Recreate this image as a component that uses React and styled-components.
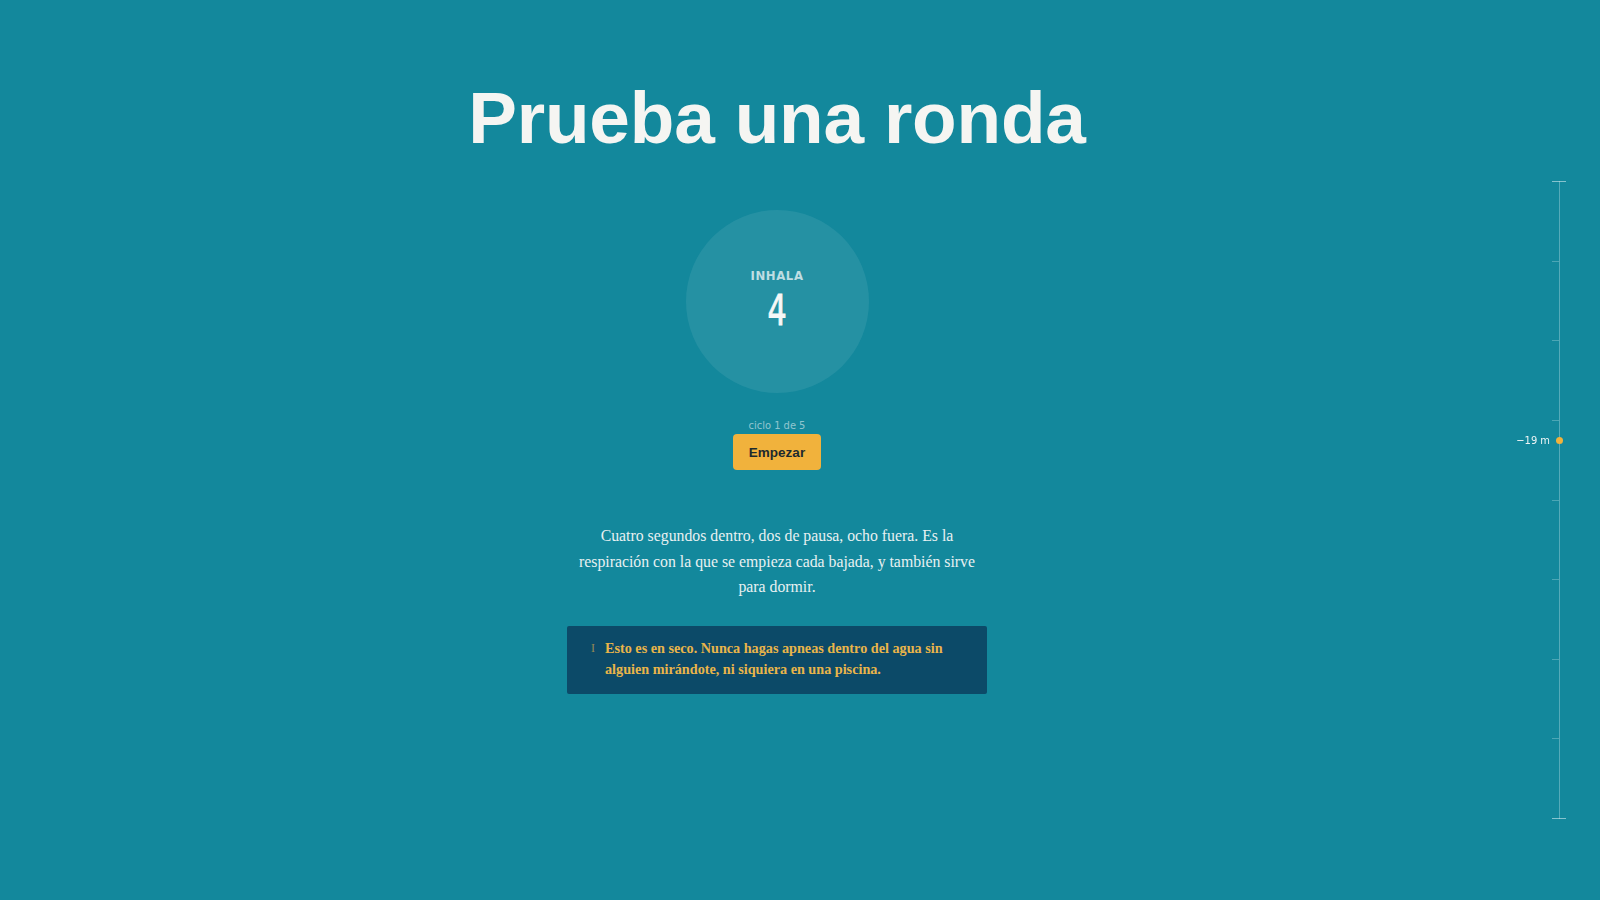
import React from "react";
import styled, { createGlobalStyle } from "styled-components";

const GlobalStyle = createGlobalStyle`
    html, body {
        margin: 0;
        padding: 0;
        background: #13889c;
    }
    body {
        font-family: "Liberation Sans", Arial, sans-serif;
        color: #f4f6f5;
    }
`;

const Page = styled.div`
    min-height: 900px;
    padding-right: 46px;
    box-sizing: border-box;
    display: flex;
    justify-content: center;
`;

const Main = styled.main`
    width: 700px;
    display: flex;
    flex-direction: column;
    align-items: center;
    padding-top: 81px;
`;

const Title = styled.h1`
    margin: 0;
    font-family: "Liberation Sans", Arial, sans-serif;
    font-weight: 700;
    font-size: 73px;
    line-height: 1;
    letter-spacing: -0.2px;
    color: #f5f5f2;
`;

const Circle = styled.div`
    margin-top: 56px;
    width: 183px;
    height: 183px;
    border-radius: 50%;
    background: rgba(255, 255, 255, 0.08);
    display: flex;
    flex-direction: column;
    align-items: center;
    justify-content: center;
`;

const Phase = styled.div`
    font-family: "DejaVu Sans Condensed", "DejaVu Sans", sans-serif;
    font-weight: 700;
    font-size: 13px;
    letter-spacing: 0.6px;
    color: rgba(235, 244, 246, 0.78);
    margin-top: -4px;
`;

const Count = styled.div`
    font-family: "DejaVu Sans Condensed", "DejaVu Sans", sans-serif;
    font-weight: 400;
    font-size: 42px;
    line-height: 1;
    margin-top: 7px;
    color: #f6f8f7;
    -webkit-text-stroke: 0.8px #f6f8f7;
    transform: scaleX(0.8);
`;

const Cycle = styled.div`
    margin-top: 26px;
    font-family: "DejaVu Sans Condensed", "DejaVu Sans", sans-serif;
    font-size: 11px;
    color: rgba(225, 238, 241, 0.62);
`;

const StartButton = styled.button`
    margin-top: 2px;
    width: 88px;
    height: 36px;
    border: none;
    border-radius: 4px;
    background: #f1b23c;
    color: #1d2a2e;
    font-family: "Liberation Sans", Arial, sans-serif;
    font-weight: 700;
    font-size: 13.5px;
    cursor: pointer;
`;

const Lead = styled.p`
    margin: 53px 0 0;
    max-width: 405px;
    text-align: center;
    font-family: "Liberation Serif", "Times New Roman", serif;
    font-size: 15.8px;
    line-height: 25.5px;
    color: #e9f1f2;
`;

const Warning = styled.div`
    margin-top: 26px;
    width: 420px;
    box-sizing: border-box;
    padding: 12px 24px 13px 24px;
    background: #0c4a68;
    border-radius: 2px;
    display: flex;
    gap: 10px;
    font-family: "Liberation Serif", "Times New Roman", serif;
    font-size: 14.2px;
    line-height: 21.5px;
    font-weight: 700;
    color: #e9b54a;
`;

const WarnMark = styled.span`
    font-weight: 400;
    font-size: 12px;
    opacity: 0.6;
`;

const Rail = styled.aside`
    position: fixed;
    top: 181px;
    right: 40px;
    height: 638px;
    width: 14px;
    display: flex;
    flex-direction: column;
    justify-content: space-between;
    align-items: flex-end;
    border-right: 1px solid rgba(210, 235, 240, 0.35);
`;

const Tick = styled.span`
    display: block;
    height: 1px;
    width: ${(props) => (props.end ? "14px" : "7px")};
    margin-right: ${(props) => (props.end ? "-7px" : "0")};
    background: rgba(210, 235, 240, ${(props) => (props.end ? 0.6 : 0.3)});
`;

const Marker = styled.div`
    position: absolute;
    right: -4px;
    top: 253px;
    display: flex;
    align-items: center;
    gap: 6px;
    font-family: "DejaVu Sans Condensed", "DejaVu Sans", sans-serif;
    font-size: 11px;
    color: #eef5f6;
    white-space: nowrap;
`;

const Dot = styled.span`
    width: 7px;
    height: 7px;
    border-radius: 50%;
    background: #f1b23c;
`;

const TICKS = [0, 1, 2, 3, 4, 5, 6, 7, 8];

export default function App() {
    return (
        <>
            <GlobalStyle />
            <Page>
                <Main>
                    <Title>Prueba una ronda</Title>
                    <Circle>
                        <Phase>INHALA</Phase>
                        <Count>4</Count>
                    </Circle>
                    <Cycle>ciclo 1 de 5</Cycle>
                    <StartButton>Empezar</StartButton>
                    <Lead>
                        Cuatro segundos dentro, dos de pausa, ocho fuera. Es la respiración con la que se empieza cada bajada, y también sirve para dormir.
                    </Lead>
                    <Warning>
                        <WarnMark>I</WarnMark>
                        <span>Esto es en seco. Nunca hagas apneas dentro del agua sin alguien mirándote, ni siquiera en una piscina.</span>
                    </Warning>
                </Main>
            </Page>
            <Rail>
                {TICKS.map((t) => (
                    <Tick key={t} end={t === 0 || t === TICKS.length - 1 ? 1 : 0} />
                ))}
                <Marker>
                    −19 m <Dot />
                </Marker>
            </Rail>
        </>
    );
}
